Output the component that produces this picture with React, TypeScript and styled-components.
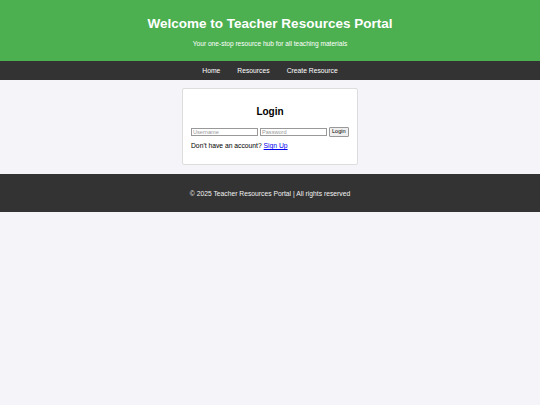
import React from "react";
import styled, { createGlobalStyle } from "styled-components";

const GlobalStyle = createGlobalStyle`
  html, body {
    margin: 0;
    padding: 0;
    background: #f4f4f9;
    font-family: "Liberation Sans", Arial, sans-serif;
  }
`;

const Header = styled.header`
  background: #4caf50;
  color: #fff;
  text-align: center;
  height: 61px;
  display: flex;
  flex-direction: column;
  align-items: center;
  padding-top: 14.5px;
  box-sizing: border-box;
`;

const Title = styled.h1`
  margin: 0;
  font-size: 13.5px;
  line-height: 18px;
  font-weight: bold;
`;

const Subtitle = styled.p`
  margin: 6.5px 0 0;
  font-size: 6.6px;
  line-height: 10px;
`;

const Nav = styled.nav`
  background: #333;
  height: 19px;
  display: flex;
  justify-content: center;
  align-items: center;
  gap: 17px;
`;

const NavLink = styled.a`
  color: #fff;
  text-decoration: none;
  font-size: 6.75px;
`;

const Main = styled.main`
  display: flex;
  justify-content: center;
  padding: 8px 0 9px;
`;

const Card = styled.section`
  width: 176px;
  box-sizing: border-box;
  background: #fff;
  border: 1px solid #ddd;
  border-radius: 2px;
  padding: 16px 8px 14px;
`;

const CardTitle = styled.h2`
  margin: 0 0 8px;
  text-align: center;
  font-size: 10px;
  line-height: 14px;
  font-weight: bold;
  color: #000;
`;

const Form = styled.form`
  display: flex;
  align-items: center;
  gap: 2px;
`;

const Input = styled.input`
  width: 67px;
  height: 8px;
  box-sizing: border-box;
  border: 1px solid #999;
  padding: 0 1px;
  font-size: 5.6px;
  font-family: "Liberation Sans", Arial, sans-serif;
  outline: none;
  &::placeholder {
    color: #999;
  }
`;

const Button = styled.button`
  height: 10px;
  box-sizing: border-box;
  border: 1px solid #999;
  background: #efefef;
  border-radius: 1px;
  padding: 0 2px;
  font-size: 5.6px;
  font-family: "Liberation Sans", Arial, sans-serif;
  color: #000;
  line-height: 1;
`;

const Note = styled.p`
  margin: 4px 0 0;
  font-size: 6.75px;
  line-height: 9px;
  color: #000;
`;

const SignLink = styled.a`
  color: #0000ee;
  text-decoration: underline;
`;

const Footer = styled.footer`
  background: #333;
  color: #f2f2f2;
  height: 38px;
  display: flex;
  justify-content: center;
  align-items: center;
  font-size: 6.75px;
`;

export default function App() {
  return (
    <>
      <GlobalStyle />
      <Header>
        <Title>Welcome to Teacher Resources Portal</Title>
        <Subtitle>Your one-stop resource hub for all teaching materials</Subtitle>
      </Header>
      <Nav>
        <NavLink href="#">Home</NavLink>
        <NavLink href="#">Resources</NavLink>
        <NavLink href="#">Create Resource</NavLink>
      </Nav>
      <Main>
        <Card>
          <CardTitle>Login</CardTitle>
          <Form onSubmit={(e) => e.preventDefault()}>
            <Input placeholder="Username" />
            <Input type="password" placeholder="Password" />
            <Button type="submit">Login</Button>
          </Form>
          <Note>
            Don't have an account? <SignLink href="#">Sign Up</SignLink>
          </Note>
        </Card>
      </Main>
      <Footer>© 2025 Teacher Resources Portal | All rights reserved</Footer>
    </>
  );
}
